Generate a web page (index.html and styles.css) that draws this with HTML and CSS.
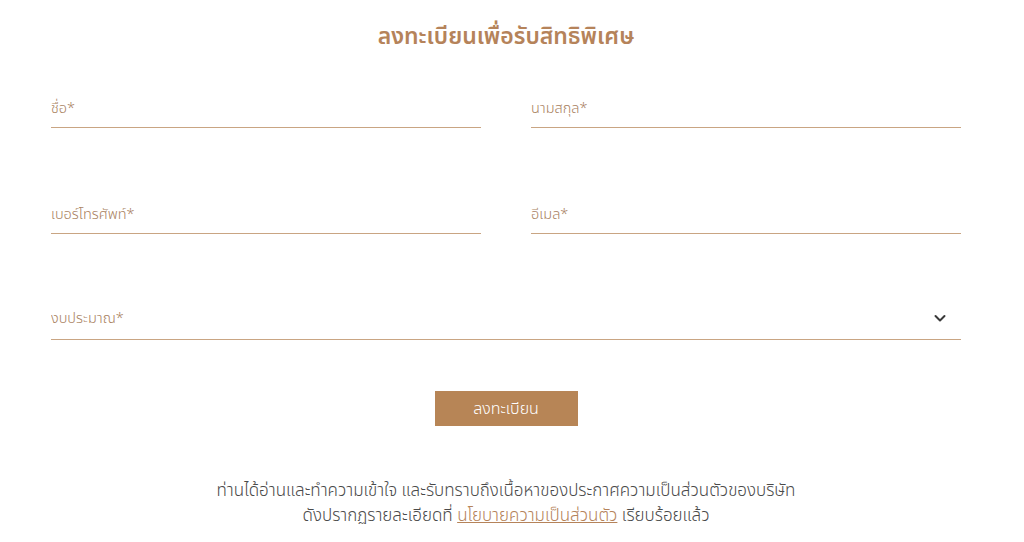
FILE: index.html
```html
<!DOCTYPE html>
<html lang="th">
<head>
    <meta charset="UTF-8">
    <meta name="viewport" content="width=device-width, initial-scale=1.0">
    <title>ลงทะเบียนเพื่อรับสิทธิพิเศษ</title>
    <link rel="stylesheet" href="styles.css">
</head>
<body>
    <div class="register">
        <h2 class="register-title">ลงทะเบียนเพื่อรับสิทธิพิเศษ</h2>

        <form class="register-form">
            <div class="field">
                <input type="text" placeholder="ชื่อ*">
            </div>
            <div class="field">
                <input type="text" placeholder="นามสกุล*">
            </div>
            <div class="field">
                <input type="tel" placeholder="เบอร์โทรศัพท์*">
            </div>
            <div class="field">
                <input type="email" placeholder="อีเมล*">
            </div>
            <div class="field field-wide">
                <select>
                    <option>งบประมาณ*</option>
                </select>
                <svg class="chevron" width="14" height="14" viewBox="0 0 14 14">
                    <path d="M2.5 5l4.5 4.5L11.5 5" fill="none" stroke="#3a3a3a" stroke-width="2" stroke-linecap="round" stroke-linejoin="round"/>
                </svg>
            </div>

            <div class="submit-row">
                <button type="button" class="submit-btn">ลงทะเบียน</button>
            </div>
        </form>

        <p class="consent">
            ท่านได้อ่านและทำความเข้าใจ และรับทราบถึงเนื้อหาของประกาศความเป็นส่วนตัวของบริษัท<br>
            ดังปรากฏรายละเอียดที่ <a href="#">นโยบายความเป็นส่วนตัว</a> เรียบร้อยแล้ว
        </p>
    </div>
</body>
</html>
```

FILE: styles.css
```css
body { margin: 0; background: #fff; font-family: "Noto Sans Thai", "Noto Sans", "DejaVu Sans", sans-serif; color: #555; }
.register { width: 910px; margin: 0 0 0 51px; }
.register-title { margin: 0; padding-top: 20px; text-align: center; color: #b5835a; font-size: 23px; font-weight: 600; line-height: 34px; }
.register-form { display: grid; grid-template-columns: 1fr 1fr; column-gap: 50px; row-gap: 61px; margin-top: 29px; }
.field { position: relative; border-bottom: 1px solid #c9a583; height: 44px; }
.field-wide { grid-column: 1 / 3; }
.field input, .field select { width: 100%; height: 44px; border: 0; outline: 0; background: transparent; font-family: inherit; font-size: 14.5px; font-weight: 300; color: #a9825f; padding: 4px 0 0; appearance: none; }
.field input::placeholder { color: #a9825f; }
.chevron { position: absolute; right: 14px; top: 16px; pointer-events: none; }
.submit-row { grid-column: 1 / 3; display: flex; justify-content: center; margin-top: -10px; }
.submit-btn { width: 143px; height: 35px; border: 0; background: #b78556; color: #fff; font-family: inherit; font-size: 16px; font-weight: 300; cursor: pointer; }
.consent { margin: 53px 0 0; text-align: center; font-size: 17px; font-weight: 300; line-height: 25px; color: #4a4a4a; }
.consent a { color: #b5835a; }
```
